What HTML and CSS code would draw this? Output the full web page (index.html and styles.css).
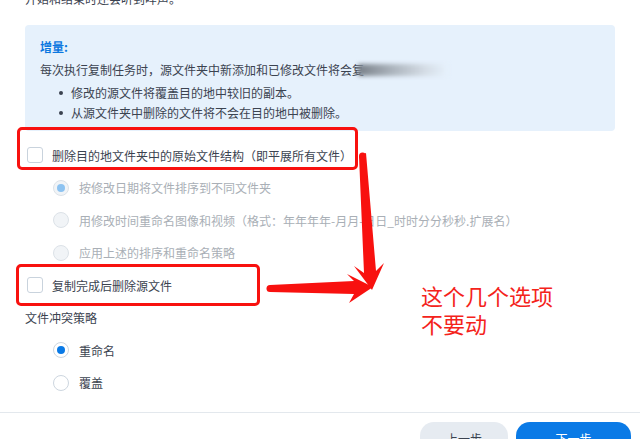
FILE: index.html
```html
<!DOCTYPE html>
<html lang="zh-CN">
<head>
<meta charset="utf-8">
<title>复制任务</title>
<link rel="stylesheet" href="styles.css">
</head>
<body>
<div class="content">
  <p class="intro">开始和结束时还会听到哔声。</p>
  <div class="info">
    <div class="info-title">增量:</div>
    <p class="info-text">每次执行复制任务时，源文件夹中新添加和已修改文件将会复<span class="blur"></span></p>
    <ul class="info-list">
      <li>修改的源文件将覆盖目的地中较旧的副本。</li>
      <li>从源文件夹中删除的文件将不会在目的地中被删除。</li>
    </ul>
  </div>
  <div class="options">
    <div class="opt"><span class="checkbox"></span>删除目的地文件夹中的原始文件结构（即平展所有文件）</div>
    <div class="sub">
      <div class="opt disabled"><span class="radio checked"></span>按修改日期将文件排序到不同文件夹</div>
      <div class="opt disabled"><span class="radio"></span>用修改时间重命名图像和视频（格式：年年年年-月月-日日_时时分分秒秒.扩展名）</div>
      <div class="opt disabled"><span class="radio"></span>应用上述的排序和重命名策略</div>
    </div>
    <div class="opt"><span class="checkbox"></span>复制完成后删除源文件</div>
    <div class="opt">文件冲突策略</div>
    <div class="sub">
      <div class="opt"><span class="radio checked"></span>重命名</div>
      <div class="opt"><span class="radio"></span>覆盖</div>
    </div>
  </div>
</div>
<div class="footer">
  <button class="btn">上一步</button>
  <button class="btn primary">下一步</button>
</div>

<div class="mark mark-1"></div>
<div class="mark mark-2"></div>
<svg class="arrows" width="640" height="439" viewBox="0 0 640 439">
  <polygon points="359,156 366,153 376,271 384,263 372,290 354,266 364,273" fill="#f8110f"/>
  <circle cx="362.5" cy="156" r="3.5" fill="#f8110f"/>
  <polygon points="270,285 354,281 347,274 373,287 349,303 354,294 270,292" fill="#f8110f"/>
  <circle cx="270" cy="288.5" r="3.5" fill="#f8110f"/>
</svg>
<div class="note">这个几个选项<br>不要动</div>
</body>
</html>
```

FILE: styles.css
```css
html, body {
  margin: 0;
  padding: 0;
}

body {
  width: 640px;
  height: 439px;
  overflow: hidden;
  position: relative;
  background: #ffffff;
  font-family: "Noto Sans CJK SC", "Noto Sans", sans-serif;
  font-size: 12px;
  color: #3b4350;
}

.content {
  padding: 0 25px;
}

.intro {
  margin: -10px 0 0;
  line-height: 18px;
}

.info {
  margin-top: 17px;
  background: #e6f1fc;
  border-radius: 4px;
  padding: 12px 15px 8px;
  line-height: 20px;
}

.info-title {
  color: #0c78e0;
  font-weight: bold;
  margin-bottom: 3px;
}

.info-text {
  margin: 0 0 3px;
  white-space: nowrap;
}

.blur {
  display: inline-block;
  vertical-align: -1px;
  width: 90px;
  height: 12px;
  margin-left: -6px;
  background: linear-gradient(to right, #7a818a 0%, #aeb6bf 40%, #d5dde6 75%, #e6f1fc 100%);
  filter: blur(2px);
}

.info-list {
  list-style: none;
  margin: 0;
  padding: 0;
}

.info-list li {
  position: relative;
  padding-left: 31px;
}

.info-list li::before {
  content: "";
  position: absolute;
  left: 19px;
  top: 8px;
  width: 4px;
  height: 4px;
  border-radius: 50%;
  background: #3b4350;
}

.options {
  margin-top: 8px;
}

.opt {
  display: flex;
  align-items: center;
  height: 32.5px;
  white-space: nowrap;
}

.checkbox {
  flex: none;
  width: 16px;
  height: 16px;
  box-sizing: border-box;
  border: 1px solid #c9d3dd;
  border-radius: 3px;
  background: #fff;
  margin-left: 2px;
  margin-right: 9px;
}

.sub {
  padding-left: 28px;
}

.radio {
  flex: none;
  position: relative;
  width: 16px;
  height: 16px;
  box-sizing: border-box;
  border: 1px solid #cdd6df;
  border-radius: 50%;
  background: #fff;
  margin-right: 10px;
}

.radio.checked::after {
  content: "";
  position: absolute;
  left: 3px;
  top: 3px;
  width: 8px;
  height: 8px;
  border-radius: 50%;
  background: #0a7ae6;
}

.disabled {
  color: #a9afb6;
}

.disabled .radio {
  background: #f1f4f7;
  border-color: #dce2e8;
}

.disabled .radio.checked::after {
  background: #8dc3f1;
}

.footer {
  margin-top: 13px;
  border-top: 1px solid #e3e8ed;
  padding: 9px 9px 0 0;
  display: flex;
  justify-content: flex-end;
  gap: 8px;
}

.btn {
  height: 32px;
  border: none;
  border-radius: 14px;
  font-family: inherit;
  font-size: 12px;
  padding: 0;
  width: 88px;
  background: #e6ebf1;
  color: #3b4350;
}

.btn.primary {
  width: 115px;
  background: #0a7ae6;
  color: #ffffff;
}

/* annotations drawn over the screenshot */
.mark {
  position: absolute;
  box-sizing: border-box;
  border: 3px solid #f8110f;
  border-radius: 5px;
}

.mark-1 {
  left: 17px;
  top: 127px;
  width: 341px;
  height: 43px;
}

.mark-2 {
  left: 16px;
  top: 264px;
  width: 244px;
  height: 42px;
}

.arrows {
  position: absolute;
  left: 0;
  top: 0;
  pointer-events: none;
}

.note {
  position: absolute;
  left: 421px;
  top: 281px;
  font-size: 22px;
  line-height: 28px;
  color: #f4231b;
  white-space: nowrap;
}
```
